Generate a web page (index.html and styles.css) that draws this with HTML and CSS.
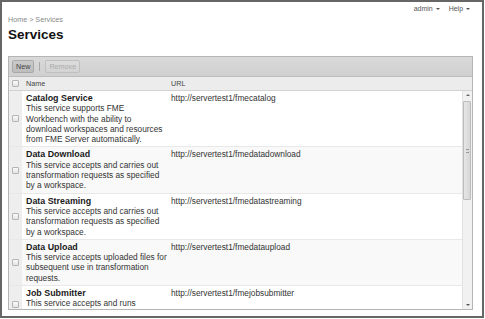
FILE: index.html
```html
<!DOCTYPE html>
<html lang="en">
<head>
  <meta charset="UTF-8" />
  <title>Services</title>
  <link rel="stylesheet" href="styles.css">
</head>
<body>
  <div class="frame">
    <div class="topnav">
      <span class="menu">admin <span class="caret"></span></span>
      <span class="menu">Help <span class="caret"></span></span>
    </div>
    <div class="crumb">Home &gt; Services</div>
    <h1>Services</h1>

    <div class="panel">
      <!-- Toolbar -->
      <div class="toolbar">
        <button type="button" class="btn btn-on">New</button>
        <span class="sep"></span>
        <button type="button" class="btn" disabled>Remove</button>
      </div>

      <!-- Column headers -->
      <div class="grid-head">
        <div class="cell-chk"><input type="checkbox" class="chk" /></div>
        <div class="cell-name">Name</div>
        <div class="cell-url">URL</div>
      </div>

      <div class="grid-body">
        <div class="rows">
          <div class="row">
            <div class="cell-chk"><input type="checkbox" class="chk" /></div>
            <div class="cell-name">
              <div class="svc-title">Catalog Service</div>
              This service supports FME<br>
              Workbench with the ability to<br>
              download workspaces and resources<br>
              from FME Server automatically.
            </div>
            <div class="cell-url">http://servertest1/fmecatalog</div>
          </div>
          <div class="row alt">
            <div class="cell-chk"><input type="checkbox" class="chk" /></div>
            <div class="cell-name">
              <div class="svc-title">Data Download</div>
              This service accepts and carries out<br>
              transformation requests as specified<br>
              by a workspace.
            </div>
            <div class="cell-url">http://servertest1/fmedatadownload</div>
          </div>
          <div class="row">
            <div class="cell-chk"><input type="checkbox" class="chk" /></div>
            <div class="cell-name">
              <div class="svc-title">Data Streaming</div>
              This service accepts and carries out<br>
              transformation requests as specified<br>
              by a workspace.
            </div>
            <div class="cell-url">http://servertest1/fmedatastreaming</div>
          </div>
          <div class="row alt">
            <div class="cell-chk"><input type="checkbox" class="chk" /></div>
            <div class="cell-name">
              <div class="svc-title">Data Upload</div>
              This service accepts uploaded files for<br>
              subsequent use in transformation<br>
              requests.
            </div>
            <div class="cell-url">http://servertest1/fmedataupload</div>
          </div>
          <div class="row row-more">
            <div class="cell-chk"><input type="checkbox" class="chk" /></div>
            <div class="cell-name">
              <div class="svc-title">Job Submitter</div>
              This service accepts and runs
            </div>
            <div class="cell-url">http://servertest1/fmejobsubmitter</div>
          </div>
        </div>

        <!-- Scrollbar -->
        <div class="scrollbar">
          <span class="arrow-up"></span>
          <div class="track">
            <div class="thumb"><span class="grip"></span></div>
          </div>
          <span class="arrow-down"></span>
        </div>
      </div>
    </div>
  </div>
</body>
</html>
```

FILE: styles.css
```css
body {
  margin: 0;
  font-family: "Liberation Sans", Arial, sans-serif;
  background: #fff;
  color: #333;
}
.frame {
  width: 484px;
  height: 318px;
  box-sizing: border-box;
  border: 2px solid #666;
  padding: 0 9px 0 6px;
  display: flex;
  flex-direction: column;
  overflow: hidden;
}
.topnav {
  margin-top: 2px;
  height: 9px;
  line-height: 9px;
  font-size: 7px;
  color: #555;
  text-align: right;
  padding-right: 3px;
}
.menu {
  margin-left: 7px;
}
.caret {
  display: inline-block;
  width: 0;
  height: 0;
  border-left: 2px solid transparent;
  border-right: 2px solid transparent;
  border-top: 2px solid #555;
  vertical-align: middle;
  margin-left: 1px;
}
.crumb {
  margin-top: 2px;
  line-height: 9px;
  font-size: 7.2px;
  color: #888;
}
h1 {
  margin: 3px 0 0 0;
  font-size: 13.5px;
  line-height: 16px;
  color: #111;
}
.panel {
  margin: 13px 0 6px 0;
  flex: 1;
  min-height: 0;
  border: 1px solid #b5b5b5;
  display: flex;
  flex-direction: column;
}
.toolbar {
  height: 20px;
  border-bottom: 1px solid #bdbdbd;
  background: linear-gradient(#d9d9d9, #d0d0d0);
  display: flex;
  align-items: flex-start;
  padding: 3px 0 0 3px;
  box-sizing: border-box;
}
.btn {
  font-family: inherit;
  font-size: 7.2px;
  height: 13px;
  line-height: 11px;
  padding: 0 3px;
  margin: 0;
  border: 1px solid #a9a9a9;
  border-radius: 2px;
  background: linear-gradient(#c9c9c9, #bdbdbd);
  color: #444;
}
.btn:disabled {
  border-color: #c0c0c0;
  background: linear-gradient(#dcdcdc, #d3d3d3);
  color: #ababab;
}
.sep {
  width: 1px;
  height: 9px;
  margin: 2px 5px 0 5px;
  background: #a8a8a8;
}
.grid-head {
  display: flex;
  height: 14px;
  box-sizing: border-box;
  border-bottom: 1px solid #d2d2d2;
  background: #ececec;
  font-size: 7.2px;
  line-height: 13px;
  color: #444;
}
.cell-chk {
  width: 13px;
  padding-left: 3px;
  box-sizing: border-box;
  display: flex;
  align-items: center;
  flex-shrink: 0;
}
.cell-name {
  width: 146px;
  padding-left: 4px;
  box-sizing: border-box;
  flex-shrink: 0;
}
.cell-url {
  padding-left: 3px;
  flex: 1;
}
.chk {
  appearance: none;
  -webkit-appearance: none;
  width: 7px;
  height: 7px;
  margin: 0;
  border: 1px solid #b4b4b4;
  background: linear-gradient(#fafafa, #e4e4e4);
  border-radius: 1px;
}
.grid-body {
  flex: 1;
  min-height: 0;
  display: flex;
  overflow: hidden;
}
.rows {
  flex: 1;
  font-size: 8.3px;
  line-height: 10.3px;
  color: #333;
}
.row {
  display: flex;
  border-bottom: 1px solid #e8e8e8;
  background: #fff;
}
.row.alt {
  background: #f9f9f9;
}
/* last row runs on below the visible area */
.row-more {
  min-height: 36px;
}
.row .cell-chk {
  background: #eeeeee;
}
.row .cell-name,
.row .cell-url {
  padding-top: 2px;
  padding-bottom: 2px;
}
.svc-title {
  font-weight: bold;
  font-size: 8.9px;
  color: #1a1a1a;
}
.scrollbar {
  width: 10px;
  flex-shrink: 0;
  background: #f1f1f1;
  border-left: 1px solid #e2e2e2;
  display: flex;
  flex-direction: column;
  align-items: center;
  box-sizing: border-box;
}
.arrow-up,
.arrow-down {
  width: 0;
  height: 0;
  border-left: 2px solid transparent;
  border-right: 2px solid transparent;
  margin: 3px 0 3px 0;
}
.arrow-up {
  border-bottom: 2px solid #666;
}
.arrow-down {
  border-top: 2px solid #555;
}
.track {
  flex: 1;
  width: 100%;
  padding: 2px 1px 0 0;
  box-sizing: border-box;
}
.thumb {
  height: 97px;
  border: 1px solid #bcbcbc;
  border-radius: 1px;
  background: linear-gradient(90deg, #e6e6e6, #d7d7d7);
  display: flex;
  align-items: center;
  justify-content: center;
}
.grip {
  width: 3px;
  height: 4px;
  border-top: 1px solid #999;
  border-bottom: 1px solid #999;
  box-sizing: border-box;
}
```
